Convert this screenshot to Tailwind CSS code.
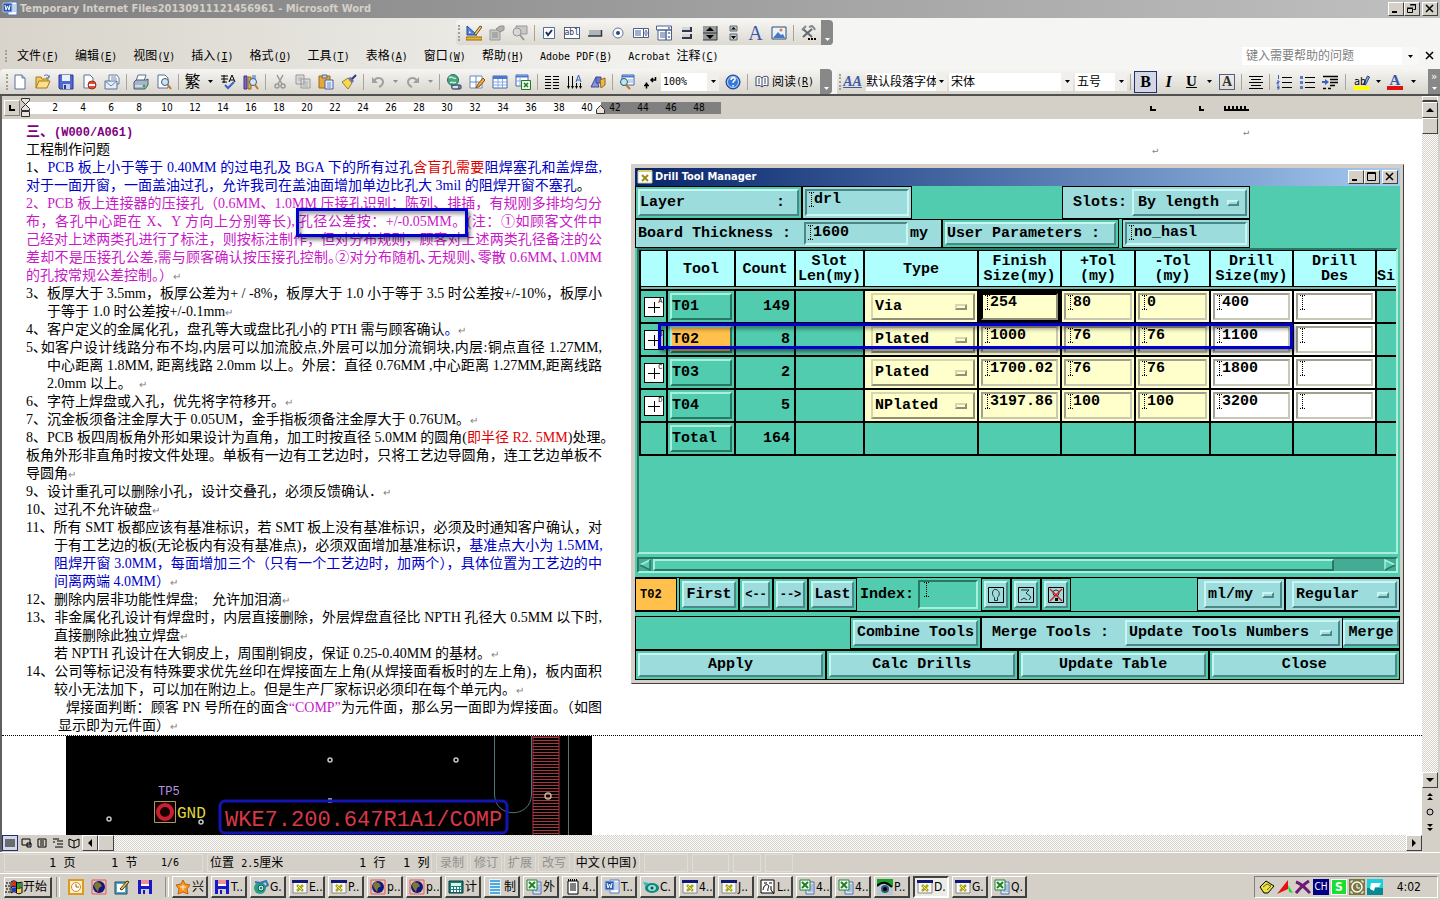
<!DOCTYPE html>
<html lang="zh-CN">
<head>
  <meta charset="UTF-8">
  <meta name="viewport" content="width=device-width, initial-scale=1.0">
  <script src="https://cdn.jsdelivr.net/npm/@tailwindcss/browser@4"></script>
  <title>Temporary Internet Files20130911121456961 - Microsoft Word</title>
</head>
<body class="flex flex-col h-screen overflow-hidden bg-[#d4d0c8] text-black text-xs font-['DejaVu_Sans_Mono','Noto_Sans_CJK_SC',monospace]">

  <!-- icon sprite -->
  <svg class="hidden">
    <symbol id="word" viewBox="0 0 16 16"><path d="M6 1h9v13H6z" fill="#fff" stroke="#5878b8"/><path d="M9 4h5M9 6h5M9 8h5M9 10h5" stroke="#88a8e0"/><path d="M1 2h9v9H1z" fill="#2858b0" stroke="#a8c0f0"/><path d="M3 4l1 5 1.500-4L7 9l1-5" fill="none" stroke="#fff"/></symbol>
    <symbol id="excel" viewBox="0 0 16 16"><path d="M7 3h8v12H7z" fill="#dce8fc" stroke="#5070b0"/><path d="M9 6h5M9 8h5M9 10h5M9 12h5" stroke="#7898d0"/><path d="M1 1h10v10H1z" fill="#f0faf0" stroke="#288030"/><path d="M3 3l6 6M9 3L3 9" stroke="#208028" stroke-width="2"/></symbol>
    <symbol id="xwin" viewBox="0 0 16 16"><path d="M1 2h14v12H1z" fill="#f8f8f8" stroke="#888"/><path d="M0 1h16v3H0z" fill="#101870"/><path d="M5 6l6 6M11 6l-6 6" stroke="#a8a820" stroke-width="2.500"/><path d="M6 7l4 4" stroke="#f0f060"/></symbol>
    <symbol id="xicon" viewBox="0 0 16 14"><path d="M1 1h14v12H1z" fill="#fff" stroke="#c8c8a0"/><path d="M1 1h14" stroke="#d8d070" stroke-width="2"/><path d="M5 5l6 6M11 5l-6 6" stroke="#909018" stroke-width="2"/></symbol>
    <symbol id="globe" viewBox="0 0 16 16"><path d="M1 1h14v14H1z" fill="#d8c8c0" stroke="#e85858"/><circle cx="8" cy="8" r="6" fill="#101880"/><path d="M5 3l4 1 2 3-3 2-1 4-3-4-1-3z" fill="#807830"/></symbol>
    <symbol id="floppy" viewBox="0 0 16 16"><path d="M1 1h14v14H1z" fill="#1818c8"/><path d="M4 1h8v6H4z" fill="#fff"/><path d="M4 2h8M4 4h8" stroke="#e02020"/><path d="M4 10h8v5H4z" fill="#d0d0d0"/><path d="M6 11h2v4H6z" fill="#1818a0"/></symbol>
    <symbol id="gball" viewBox="0 0 16 16"><circle cx="7" cy="9" r="6" fill="#28a088"/><circle cx="8" cy="9" r="3" fill="#b0e8e0" stroke="#105848"/><path d="M2 3l5 1 6-2 2 4-3 2" fill="none" stroke="#3078b8" stroke-width="2"/><circle cx="8" cy="9" r="1" fill="#104848"/></symbol>
    <symbol id="cfish" viewBox="0 0 16 16"><ellipse cx="9" cy="9" rx="7" ry="5" fill="#108880"/><ellipse cx="9" cy="9" rx="4" ry="3" fill="#a0e0d8"/><circle cx="9" cy="9" r="1.500" fill="#105050"/><path d="M0 3l6 1-4 3z" fill="#20c0c8"/></symbol>
    <symbol id="star" viewBox="0 0 16 16"><path d="M8 1l2 4 5 1-3 4 1 5-5-2-5 2 1-5-3-4 5-1z" fill="#f89828" stroke="#c06008"/><path d="M5 8h6M8 6v5" stroke="#fff0c0"/></symbol>
    <symbol id="calc" viewBox="0 0 16 16"><path d="M1 2h14v12H1z" fill="#188080" stroke="#083838"/><path d="M3 4h10v3H3z" fill="#d8f8d8"/><path d="M3 9h10M3 12h10" stroke="#fff" stroke-width="2" stroke-dasharray="2 1"/></symbol>
    <symbol id="lines" viewBox="0 0 16 16"><path d="M2 0h12v16H2z" fill="#e0f4fc"/><path d="M3 2h10M3 5h10M3 8h10M3 11h10M3 14h10" stroke="#2890d0" stroke-width="1.500"/></symbol>
    <symbol id="note" viewBox="0 0 16 16"><path d="M3 2h10v13H3z" fill="#fff" stroke="#000"/><path d="M3 1h10" stroke="#000" stroke-width="2" stroke-dasharray="1 1"/><path d="M5 5h6M5 7h6M5 9h6M5 11h6" stroke="#000"/></symbol>
    <symbol id="doodle" viewBox="0 0 16 16"><path d="M1 1h13v13H1z" fill="#fff" stroke="#000"/><path d="M3 11c1-5 3-6 5-5s-1 4 0 6M4 4h3M9 4h3M11 7v4l3 4" fill="none" stroke="#000"/></symbol>
    <symbol id="eye" viewBox="0 0 16 16"><path d="M0 0h16v16H0z" fill="#b8c8d0"/><path d="M0 0h16v8C11 2 5 3 0 6z" fill="#18a028"/><path d="M0 7c5-5 10-4 15 1" fill="none" stroke="#000" stroke-width="2"/><circle cx="8" cy="10" r="4" fill="#305878"/><circle cx="8" cy="10" r="2" fill="#000"/></symbol>
    <symbol id="clock" viewBox="0 0 16 16"><path d="M1 1h14v14H1z" fill="#fff0c8" stroke="#e09820" stroke-width="2"/><circle cx="8" cy="8" r="4.500" fill="#fff" stroke="#d08818"/><path d="M8 5v3h3" fill="none" stroke="#a06008"/></symbol>
    <symbol id="desk" viewBox="0 0 16 16"><path d="M1 3h12v12H1z" fill="#58a8c8" stroke="#204860"/><path d="M3 5h8v8H3z" fill="#fff"/><path d="M6 10l7-8 2 1-7 8z" fill="#f0d048" stroke="#403000"/></symbol>
    <symbol id="flag" viewBox="0 0 18 16"><path d="M7 3c2-1 3-1 4 0v5c-1-1-2-1-4 0z" fill="#e82818"/><path d="M12 3c2 1 3 1 4 0v5c-1 1-2 1-4 0z" fill="#18a828"/><path d="M7 9c2-1 3-1 4 0v4c-1-1-2-1-4 0z" fill="#1838d8"/><path d="M12 9c2 1 3 1 4 0v4c-1 1-2 1-4 0z" fill="#f8d818"/><path d="M6 3v11M11.500 3v11M17 3v11M6 3c3-2 4-1 5.500 0s3 1 5 0M6 8.500c3-2 4-1 5.500 0s3 1 5 0M6 14c3-2 4-1 5.500 0s3 1 5 0" stroke="#000" fill="none"/><path d="M1 4h4M0 7h5M1 10h4M0 13h5" stroke="#000" stroke-dasharray="2 1"/></symbol>
    <symbol id="dn" viewBox="0 0 5 3"><path d="M0 0h5L2.500 3z"/></symbol>
    <symbol id="caret" viewBox="0 0 5 15"><path d="M0 .5h5M0 14.500h5M2.500 1v13" stroke="#000" stroke-dasharray="1 1"/></symbol>

    <symbol id="t-new" viewBox="0 0 16 16"><path d="M3 1h7l3 3v11H3z" fill="#fff" stroke="#58709c"/><path d="M10 1v3h3" fill="#c8d8f0" stroke="#58709c"/></symbol>
    <symbol id="t-open" viewBox="0 0 16 16"><path d="M1 14V3h5l1 2h6v3" fill="#f0c860" stroke="#a87818"/><path d="M1 14l3-7h11l-3 7z" fill="#fce08c" stroke="#a87818"/><path d="M9 2c2-2 4-1 5 1M14 1v3h-3" fill="none" stroke="#4868a8"/></symbol>
    <symbol id="t-save" viewBox="0 0 16 16"><path d="M1 1h14v14H2l-1-1z" fill="#5068d0" stroke="#28388c"/><path d="M4 1h8v6H4z" fill="#e8f0fc"/><path d="M5 10h7v5H5z" fill="#c8d0e8"/><path d="M6 11h2v4H6z" fill="#28388c"/></symbol>
    <symbol id="t-perm" viewBox="0 0 16 16"><path d="M3 1h6l3 3v10H3z" fill="#fff" stroke="#58709c"/><circle cx="11" cy="11" r="4" fill="#e05038" stroke="#a02818"/><path d="M8 11h6" stroke="#fff" stroke-width="2"/></symbol>
    <symbol id="t-mail" viewBox="0 0 16 16"><path d="M5 1h8l2 3v6H5z" fill="#fff" stroke="#687890"/><path d="M1 7h12v8H1z" fill="#e4ecf8" stroke="#58709c"/><path d="M1 7l6 5 6-5M7 3h5M7 5h6" fill="none" stroke="#7088b0"/></symbol>
    <symbol id="t-print" viewBox="0 0 16 16"><path d="M5 1h8l-2 6H3z" fill="#fff" stroke="#58709c"/><path d="M1 8l2-2h10l2-1v6l-3 4H1z" fill="#a8b4c8" stroke="#485870"/><path d="M2 12h9" stroke="#fff"/><circle cx="11" cy="12" r="1.500" fill="#28b838"/></symbol>
    <symbol id="t-prev" viewBox="0 0 16 16"><path d="M2 1h7l3 3v10H2z" fill="#fff" stroke="#58709c"/><circle cx="9" cy="8" r="3.500" fill="#c8e4f8" stroke="#485870"/><path d="M12 11l3 4" stroke="#c07820" stroke-width="2"/></symbol>
    <symbol id="t-check" viewBox="0 0 16 16"><path d="M1 2h7M1 5h7M4 1v8M2 8h5M9 8l3-7 3 7M10 6h4" fill="none" stroke="#000"/><path d="M5 11l3 3 6-6" fill="none" stroke="#3860d0" stroke-width="2"/></symbol>
    <symbol id="t-res" viewBox="0 0 16 16"><path d="M1 2h3v13H1z" fill="#7868c8" stroke="#403088"/><path d="M5 3h3v12H5z" fill="#e0b048" stroke="#906818"/><path d="M9 1h4v9H9z" fill="#88a8e0"/><circle cx="10" cy="8" r="3.500" fill="#d0e8fc" stroke="#485870"/><path d="M12 11l3 4" stroke="#c07820" stroke-width="2"/></symbol>
    <symbol id="t-cut" viewBox="0 0 16 16"><path d="M5 1l5 9M11 1L6 10" stroke="#989898" stroke-width="1.500"/><circle cx="5" cy="12" r="2" fill="none" stroke="#989898" stroke-width="1.500"/><circle cx="11" cy="12" r="2" fill="none" stroke="#989898" stroke-width="1.500"/></symbol>
    <symbol id="t-copy" viewBox="0 0 16 16"><path d="M1 1h8v9H1zM6 5h9v9H6z" fill="#dcdcdc" stroke="#989898"/><path d="M8 8h5M8 10h5M8 12h5M3 4h4M3 6h3" stroke="#a8a8a8"/></symbol>
    <symbol id="t-paste" viewBox="0 0 16 16"><path d="M1 2h11v12H1z" fill="#e8a838" stroke="#98681c"/><path d="M4 1h5v3H4z" fill="#c8ccd4" stroke="#606878"/><path d="M7 6h8v9H7z" fill="#e8f0fc" stroke="#4860a0"/><path d="M9 9h4M9 11h4M9 13h4" stroke="#6888c8"/></symbol>
    <symbol id="t-brush" viewBox="0 0 16 16"><path d="M1 8l6-4 4 5-4 6z" fill="#f4d858" stroke="#a08020"/><path d="M7 4l3-1 3 4-2 2z" fill="#6870b8"/><path d="M11 5l4-4" stroke="#303870" stroke-width="2"/></symbol>
    <symbol id="t-undo" viewBox="0 0 16 16"><path d="M4 7c3-5 9-3 9 1 0 3-2 4-4 5" fill="none" stroke="#a0a0a0" stroke-width="2"/><path d="M2 3v6h6z" fill="#a0a0a0"/></symbol>
    <symbol id="t-redo" viewBox="0 0 16 16"><path d="M12 7C9 2 3 4 3 8c0 3 2 4 4 5" fill="none" stroke="#a0a0a0" stroke-width="2"/><path d="M14 3v6H8z" fill="#a0a0a0"/></symbol>
    <symbol id="t-link" viewBox="0 0 16 16"><circle cx="7" cy="6" r="5.500" fill="#48a868" stroke="#286888"/><path d="M3 4c3-3 4 2 7 0M4 9c2-2 4 1 6-1" stroke="#b8e8f8" fill="none" stroke-width="1.500"/><path d="M6 11h5a2 2 0 010 4H8a2 2 0 01-2-3zM10 11h3a2 2 0 010 4h-3" fill="none" stroke="#486080" stroke-width="1.500"/></symbol>
    <symbol id="t-tb" viewBox="0 0 16 16"><path d="M1 2h12v12H1zM1 8h12M7 2v12" fill="#fff" stroke="#6888c8"/><path d="M7 14l2-4 5-6 2 2-5 6z" fill="#f0a838" stroke="#885010"/></symbol>
    <symbol id="t-tbl" viewBox="0 0 16 16"><path d="M1 2h14v12H1z" fill="#fff" stroke="#4068b0"/><path d="M1 3.500h14" stroke="#4878d0" stroke-width="3"/><path d="M1 8h14M1 11h14M6 5v9M10.500 5v9" stroke="#88a8e0"/></symbol>
    <symbol id="t-xl" viewBox="0 0 16 16"><path d="M1 1h12v11H1z" fill="#fff" stroke="#4068b0"/><path d="M1 2.500h12" stroke="#4878d0" stroke-width="2"/><path d="M1 7h12M5 4v8" stroke="#88a8e0"/><path d="M6.500 6.500h9v9h-9z" fill="#e8f8e8" stroke="#207828"/><path d="M9 9l4 4M13 9l-4 4" stroke="#207828" stroke-width="1.500"/></symbol>
    <symbol id="t-cols" viewBox="0 0 16 16"><path d="M1 2.500h6M9 2.500h6M1 5.500h6M9 5.500h6M1 8.500h6M9 8.500h6M1 11.500h6M9 11.500h6M1 14.500h6M9 14.500h6" stroke="#000"/></symbol>
    <symbol id="t-dir" viewBox="0 0 16 16"><path d="M1.500 2v12M5.500 2v12M9.500 9v5M13.500 9v5" stroke="#000"/><path d="M0 12l1.500 3L3 12zM4 12l1.500 3L7 12zM8 12l1.500 3 1.500-3zM12 12l1.500 3 1.500-3z"/><path d="M9 8l2.500-7L14 8M10 6h3" fill="none" stroke="#3860b8"/></symbol>
    <symbol id="t-draw" viewBox="0 0 16 16"><path d="M1 13l5-10 3 10z" fill="#8898e0" stroke="#404898"/><path d="M6 3h5v6H6z" fill="#6878d8" stroke="#404898"/><path d="M10 6l5-2v7l-4 3z" fill="#f0b848" stroke="#906818"/></symbol>
    <symbol id="t-map" viewBox="0 0 16 16"><path d="M3 1h12v10H3z" fill="#fff" stroke="#4068b0"/><path d="M3 2.500h12" stroke="#4878d0" stroke-width="2"/><path d="M9 6h5M9 8h5" stroke="#88a8e0"/><circle cx="5" cy="8" r="3.500" fill="#b8e8f0" stroke="#285868"/><path d="M7 11l4 4" stroke="#c07820" stroke-width="2"/></symbol>
    <symbol id="t-mark" viewBox="0 0 16 16"><path d="M13.500 3v3H9M11 4L9 6l2 2M2 11.500h5M4.500 8.500v6M3 10.500h3" fill="none" stroke="#000" stroke-width="1.500"/></symbol>
    <symbol id="t-help" viewBox="0 0 16 16"><circle cx="8" cy="8" r="7" fill="#3878d8" stroke="#183c88"/><circle cx="8" cy="8" r="5.500" fill="none" stroke="#b8d4f8"/><path d="M6 6c0-3 5-3 4 0-1 1-2 1-2 3M8 11v1.500" fill="none" stroke="#fff" stroke-width="1.500"/></symbol>
    <symbol id="t-book" viewBox="0 0 16 16"><path d="M8 4C6 2 4 2 2 3v9c2-1 4-1 6 1 2-2 4-2 6-1V3c-2-1-4-1-6 1z" fill="#fff" stroke="#384868"/><path d="M8 4v9M4 5h2M4 7h2M4 9h2M10 5h2M10 7h2M10 9h2" stroke="#384868"/></symbol>

    <symbol id="c-design" viewBox="0 0 16 16"><path d="M1 1v9h10z" fill="#5888e0" stroke="#204898"/><path d="M3 6v2h2z" fill="#fff"/><path d="M0 12h16v3H0z" fill="#f0b830" stroke="#986810"/><path d="M8 9l6-8 2 1-6 8z" fill="#f0d080" stroke="#704810"/></symbol>
    <symbol id="c-prop" viewBox="0 0 16 16"><path d="M1 5h10v10H1z" fill="#c8c8c8" stroke="#989898"/><path d="M3 8h6M3 10h6M3 12h6" stroke="#888"/><path d="M7 4l4-3h4v4l-4 2z" fill="#b0b0b0" stroke="#909090"/></symbol>
    <symbol id="c-code" viewBox="0 0 16 16"><path d="M4 1h11v8H4z" fill="#c8c8c8" stroke="#989898"/><circle cx="5" cy="7" r="4" fill="#d8d8d8" stroke="#989898"/><path d="M8 10l4 5" stroke="#989898" stroke-width="2"/></symbol>
    <symbol id="c-chk" viewBox="0 0 16 16"><path d="M2.500 2.500h11v11h-11z" fill="#fff" stroke="#5070a0"/><path d="M5 7l2 3 4-5" fill="none" stroke="#203058" stroke-width="2"/></symbol>
    <symbol id="c-btn" viewBox="0 0 16 16"><path d="M2 5h12v6H2z" fill="#b0b4bc"/><path d="M1 11h13.500V5" fill="none" stroke="#303848" stroke-width="1.500"/></symbol>
    <symbol id="c-opt" viewBox="0 0 16 16"><circle cx="8" cy="8" r="5" fill="#fff" stroke="#6078a0"/><circle cx="8" cy="8" r="2" fill="#304878"/></symbol>
    <symbol id="c-list" viewBox="0 0 16 16"><path d="M.5 3.500h15v9H.5zM10.500 3v10M10 8h6" fill="#fff" stroke="#486090"/><path d="M2 6h6M2 8h6M2 10h6" stroke="#486090"/><path d="M11.500 6.500h3L13 5zM11.500 9.500h3L13 11z" fill="#203058"/></symbol>
    <symbol id="c-combo" viewBox="0 0 16 16"><path d="M.5 1h15v4H.5zM2 5h8v10H2zM10 5h5.500v10H10z" fill="#fff" stroke="#486090"/><path d="M4 8h5M4 10h5M4 12h5" stroke="#486090"/><path d="M11.500 8.500h3L13 7zM11.500 11.500h3L13 13zM11.500 2.500h3L13 4z" fill="#203058"/></symbol>
    <symbol id="c-tog" viewBox="0 0 16 16"><path d="M3 6h9V2M3 13h9V9" fill="none" stroke="#303848" stroke-width="2"/><path d="M3 2h8v3H3zM3 9h8v3H3z" fill="#d0d4dc"/></symbol>
    <symbol id="c-spin" viewBox="0 0 16 16"><path d="M1 1h14v14H1z" fill="#989c9c"/><path d="M15 1v14H1M1 8h14" fill="none" stroke="#303838"/><path d="M4 6h8L8 2zM4 10h8l-4 4z"/></symbol>
    <symbol id="c-scr" viewBox="0 0 16 16"><path d="M5 1h7v5H5zM5 9h7v6H5z" fill="#c0c8d0" stroke="#606870"/><path d="M6 4.500h5L8.500 2zM6 11h5l-2.500 3z"/></symbol>
    <symbol id="c-img" viewBox="0 0 16 16"><path d="M1 2h14v12H1z" fill="#e8f4fc" stroke="#304878"/><path d="M2 13l5-6 3 3 2-1 2 4z" fill="#4878c0"/><circle cx="10" cy="5" r="1.500" fill="#e87838"/></symbol>
    <symbol id="c-tool" viewBox="0 0 16 16"><path d="M3 4l9 8M12 4L3 12" stroke="#606870" stroke-width="2"/><path d="M2 5l4-4M9 2l3-1 2 2 1 2" stroke="#808890" fill="none" stroke-width="2"/><path d="M8 14h8" stroke="#000" stroke-width="2" stroke-dasharray="2 1"/></symbol>

    <symbol id="f-al" viewBox="0 0 16 16"><path d="M1 2.500h14M3 5.500h10M1 8.500h14M3 11.500h10M1 14.500h14" stroke="#000"/></symbol>
    <symbol id="f-num" viewBox="0 0 16 16"><path d="M6 3.500h10M6 8.500h10M6 13.500h10" stroke="#000"/><path d="M2.500 1v4M1 7h2v1.500H1V10h2M1 12h2v3H1M1 13.500h2" fill="none" stroke="#3860c0"/></symbol>
    <symbol id="f-bul" viewBox="0 0 16 16"><path d="M6 3.500h10M6 8.500h10M6 13.500h10" stroke="#000"/><path d="M1 2h3v3H1zM1 7h3v3H1zM1 12h3v3H1z" fill="#5878c8"/></symbol>
    <symbol id="f-ind" viewBox="0 0 16 16"><path d="M1 2.500h15M8 5.500h8M8 8.500h8M8 11.500h5M1 14.500h3M6 14.500h3" stroke="#000" stroke-width="1.500"/><path d="M0 7h3V5l4 3-4 3V9H0z" fill="#3860c0"/></symbol>
    <symbol id="f-hi" viewBox="0 0 16 16"><path d="M0 12h16v4H0z" fill="#ffff00"/><path d="M10 10l4-8 2 1-4 8z" fill="#88a8e0" stroke="#304878"/></symbol>
  </svg>

  <header class="flex items-center h-[18px] shrink-0 px-0.5 bg-linear-to-r from-[#808080] to-[#c0c0c0]">
    <svg class="size-4"><use href="#word"/></svg>
    <h1 class="ml-0.5 grow font-bold text-[11px] text-[#d4d0c8] font-['DejaVu_Sans_Condensed','DejaVu_Sans',sans-serif]">Temporary Internet Files20130911121456961 - Microsoft Word</h1>
    <button aria-label="Minimize" class="w-4 h-3.5 bg-[#d4d0c8] border border-white border-r-[#404040] border-b-[#404040]"><svg class="size-3"><path d="M3 9h5" stroke="#000" stroke-width="2"/></svg></button>
    <button aria-label="Restore" class="w-4 h-3.5 bg-[#d4d0c8] border border-white border-r-[#404040] border-b-[#404040]"><svg class="size-3"><path d="M5.500 1.500h5v5h-2M2.500 5.500h5v4h-5zM5 2h6M2 5h6" fill="none" stroke="#000"/></svg></button>
    <button aria-label="Close" class="w-4 h-3.5 ml-0.5 bg-[#d4d0c8] border border-white border-r-[#404040] border-b-[#404040]"><svg class="size-3"><path d="M3 2l7 7M10 2L3 9" stroke="#000" stroke-width="1.500"/></svg></button>
  </header>

  <div class="shrink-0 bg-linear-to-r from-[#d8d4cb] to-[#f5f5f3] to-50% border-b-2 border-[#505050]">
    <div class="flex h-[27px] pt-0.5 pl-[456px]">
      <div id="controls" class="flex items-center rounded bg-linear-to-b from-[#f6f5f2] to-[#dcd9d0]"></div>
    </div>
    <nav class="flex items-center h-[22px] pl-[5px] pr-1">
      <i class="w-0.5 h-3 mr-2.5 border-l-2 border-dotted border-[#a0a098]"></i>
      <div id="menu" class="flex grow gap-4"></div>
      <input aria-label="帮助" placeholder="键入需要帮助的问题" class="w-40 h-[18px] pl-1 bg-white placeholder:text-[#808080]">
      <button aria-label="帮助列表" class="flex items-center justify-center w-4 h-[18px] bg-[#f8f8f6]"><svg class="w-[5px] h-[3px]"><use href="#dn"/></svg></button>
      <button aria-label="关闭文档" class="ml-1.5"><svg class="size-3"><path d="M2 2l7 7M9 2L2 9" stroke="#000" stroke-width="1.500"/></svg></button>
    </nav>
    <div class="flex h-[27px] pt-0.5">
      <div id="standard" class="flex items-center pl-1.5 rounded bg-linear-to-b from-[#f6f5f2] to-[#d8d5cc]"></div>
      <div class="flex items-center grow ml-[5px] pl-0.5 bg-linear-to-b from-[#f6f5f2] to-[#d8d5cc]">
        <i class="w-0.5 h-4 border-l-2 border-dotted border-[#a0a098]"></i>
        <button aria-label="样式和格式" class="w-[23px] text-sm italic font-bold text-[#4058a8] underline font-['Liberation_Serif',serif]">AA</button>
        <div class="flex w-[81px] h-[18px] ml-0.5 bg-white"><select aria-label="样式" class="min-w-0 grow appearance-none"><option>默认段落字体</option></select><span class="flex items-center justify-center w-3 bg-[#f0efeb]"><svg class="w-[5px] h-[3px]"><use href="#dn"/></svg></span></div>
        <div class="flex w-[124px] h-[18px] ml-0.5 bg-white"><select aria-label="字体" class="min-w-0 grow appearance-none pl-0.5"><option>宋体</option></select><span class="flex items-center justify-center w-3 bg-[#f0efeb]"><svg class="w-[5px] h-[3px]"><use href="#dn"/></svg></span></div>
        <div class="flex w-[52px] h-[18px] ml-0.5 bg-white"><select aria-label="字号" class="min-w-0 grow appearance-none pl-0.5"><option>五号</option></select><span class="flex items-center justify-center w-3 bg-[#f0efeb]"><svg class="w-[5px] h-[3px]"><use href="#dn"/></svg></span></div>
        <i class="w-px h-4 mx-[3px] bg-[#a8a59c]"></i>
        <button class="w-[23px] h-[22px] border border-[#203070] bg-[#d4d8e4] text-base leading-5 font-bold font-['Liberation_Serif',serif]">B</button>
        <button class="w-[23px] text-base font-bold italic font-['Liberation_Serif',serif]">I</button>
        <button class="w-[23px] text-[15px] font-bold underline font-['Liberation_Serif',serif]">U</button>
        <button aria-label="下划线样式" class="flex justify-center w-3"><svg class="w-[5px] h-[3px]"><use href="#dn"/></svg></button>
        <button class="w-4 h-4 mx-1 border border-[#506080] text-sm leading-3.5 font-bold text-[#303030] font-['Liberation_Serif',serif]">A</button>
        <i class="w-px h-4 mx-0.5 bg-[#a8a59c]"></i>
        <button aria-label="居中" class="flex justify-center w-[23px]"><svg class="size-4"><use href="#f-al"/></svg></button>
        <i class="w-px h-4 mx-0.5 bg-[#a8a59c]"></i>
        <button aria-label="编号" class="flex justify-center w-[23px]"><svg class="size-4"><use href="#f-num"/></svg></button>
        <button aria-label="项目符号" class="flex justify-center w-[23px]"><svg class="size-4"><use href="#f-bul"/></svg></button>
        <button aria-label="缩进" class="flex justify-center w-[23px]"><svg class="size-4"><use href="#f-ind"/></svg></button>
        <i class="w-px h-4 mx-1 bg-[#a8a59c]"></i>
        <button class="relative w-[23px] h-4 text-[10px] leading-2 text-left pl-1"><svg class="absolute inset-0 w-[23px] h-4"><use href="#f-hi"/></svg><span class="relative">ab</span></button>
        <button aria-label="突出显示颜色" class="flex justify-center w-2.5"><svg class="w-[5px] h-[3px]"><use href="#dn"/></svg></button>
        <button class="w-4 h-4 mx-1 border-b-4 border-[#e01010] text-[15px] leading-3 font-bold text-[#3858a8] font-['Liberation_Serif',serif]">A</button>
        <button aria-label="字体颜色" class="flex justify-center w-3"><svg class="w-[5px] h-[3px]"><use href="#dn"/></svg></button>
        <button aria-label="工具栏选项" class="flex flex-col items-center justify-between w-3 h-full ml-auto py-1 bg-[#888] text-white text-[10px] leading-2">»<svg class="w-[5px] h-[3px] fill-white"><use href="#dn"/></svg></button>
      </div>
    </div>
  </div>

  <main class="flex grow min-h-0">
    <div class="flex flex-col grow min-w-0 border-l-2 border-[#606060]">

      <div class="flex items-center h-[23px] shrink-0 pl-0.5 text-[10px] leading-3 font-['DejaVu_Sans_Condensed',sans-serif]">
        <button aria-label="制表符" class="size-4 border border-white border-r-[#808080] border-b-[#808080]"><svg class="size-3.5"><path d="M5 4v5h5" fill="none" stroke="#000" stroke-width="2"/></svg></button>
        <svg class="w-[11px] h-5 -mr-1.5 z-10"><path d="M1.500.5h8v2l-4 4-4-4zM1.500 12.500v-2l4-4 4 4v2zM1.500 13.500h8v5h-8z" fill="#e8e4dc" stroke="#303030"/></svg>
        <div id="ruler-in" class="flex bg-white pl-[16px]"></div>
        <svg class="w-[11px] h-3 -ml-1.5 -mr-[5px] mt-1 z-10"><path d="M1.500 9.500v-4l4-4 4 4v4z" fill="#e8e4dc" stroke="#303030"/></svg>
        <div id="ruler-out" class="flex bg-[#808080] pr-2"></div>
        <svg class="w-28 h-2.5 ml-auto mr-[172px]"><path d="M13 3v4h5M62 3v4h4M86 7h25M87 3v4M91 3v4M95 3v4M99 3v4M103 3v4M107 3v4" fill="none" stroke="#000" stroke-width="2"/></svg>
      </div>

      <div class="flex flex-col grow min-h-0 overflow-hidden bg-white">
        <div class="flex pt-1 pl-6">
          <article class="w-[576px] shrink-0 whitespace-nowrap text-sm leading-[18px] font-['Liberation_Serif','Noto_Sans_CJK_SC',serif]">
            <h2 class="font-bold text-[#800080]">三、<span class="text-xs leading-none font-['Liberation_Mono',monospace]">(W000/A061)</span></h2>
            <p>工程制作问题</p>
            <div class="text-[#0000c8]">
              <p class="[text-align-last:justify]"><span class="text-black">1、</span>PCB 板上小于等于 0.40MM 的过电孔及 BGA 下的所有过孔<span class="text-[#e00000]">含盲孔需要</span>阻焊塞孔和盖焊盘,</p>
              <p>对于一面开窗，一面盖油过孔，允许我司在盖油面增加单边比孔大 3mil 的阻焊开窗不塞孔<span class="text-black">。</span></p>
            </div>
            <div class="relative text-[#c818c8]">
              <p class="[text-align-last:justify]">2、PCB 板上连接器的压接孔（0.6MM、1.0MM 压接孔识别：陈列、排插，有规刚多排均匀分</p>
              <p class="[text-align-last:justify]">布，各孔中心距在 X、Y 方向上分别等长), 孔径公差按：+/-0.05MM。(注：①如顾客文件中</p>
              <p class="[text-align-last:justify]">己经对上述两类孔进行了标注，则按标注制作；但对分布规则，顾客对上述两类孔径备注的公</p>
              <p class="[text-align-last:justify]">差却不是压接孔公差,需与顾客确认按压接孔控制｡②对分布随机､无规则､零散 0.6MM､1.0MM</p>
              <p>的孔按常规公差控制。）<span class="text-[10px] leading-none text-[#808080]">↵</span></p>
              <i class="absolute left-[270px] top-[13px] w-[172px] h-[29px] border-3 border-[#0000d0] shadow-[2px_3px_4px_rgba(0,0,0,.5),inset_2px_3px_4px_rgba(0,0,0,.4)]"></i>
            </div>
            <div>
              <p class="[text-align-last:justify]">3、板厚大于 3.5mm，板厚公差为+ / -8%，板厚大于 1.0 小于等于 3.5 时公差按+/-10%，板厚小</p>
              <p class="pl-[21px]">于等于 1.0 时公差按+/-0.1mm<span class="text-[10px] leading-none text-[#808080]">↵</span></p>
            </div>
            <p>4、客户定义的金属化孔，盘孔等大或盘比孔小的 PTH 需与顾客确认<span class="text-[#0000c8]">。</span><span class="text-[10px] leading-none text-[#808080]">↵</span></p>
            <div>
              <p class="[text-align-last:justify]">5､如客户设计线路分布不均,内层可以加流胶点,外层可以加分流铜块,内层:铜点直径 1.27MM,</p>
              <p class="pl-[21px] [text-align-last:justify]">中心距离 1.8MM, 距离线路 2.0mm 以上。外层：直径 0.76MM ,中心距离 1.27MM,距离线路</p>
              <p class="pl-[21px]">2.0mm 以上。&nbsp; <span class="text-[10px] leading-none text-[#808080]">↵</span></p>
            </div>
            <p>6、字符上焊盘或入孔，优先将字符移开。<span class="text-[10px] leading-none text-[#808080]">↵</span></p>
            <p>7、沉金板须备注金厚大于 0.05UM，金手指板须备注金厚大于 0.76UM。<span class="text-[10px] leading-none text-[#808080]">↵</span></p>
            <div>
              <p class="[text-align-last:justify]">8、PCB 板四周板角外形如果设计为直角，加工时按直径 5.0MM 的圆角(<span class="text-[#e00000]">即半径 R2. 5MM</span>)处理｡</p>
              <p class="[text-align-last:justify]">板角外形非直角时按文件处理。单板有一边有工艺边时，只将工艺边导圆角，连工艺边单板不</p>
              <p>导圆角<span class="text-[10px] leading-none text-[#808080]">↵</span></p>
            </div>
            <p>9、设计重孔可以删除小孔，设计交叠孔，必须反馈确认．<span class="text-[10px] leading-none text-[#808080]">↵</span></p>
            <p>10、过孔不允许破盘<span class="text-[10px] leading-none text-[#808080]">↵</span></p>
            <div>
              <p class="[text-align-last:justify]">11、所有 SMT 板都应该有基准标识，若 SMT 板上没有基准标识，必须及时通知客户确认，对</p>
              <p class="pl-7 [text-align-last:justify]">于有工艺边的板(无论板内有没有基准点)，必须双面增加基准标识，<span class="text-[#0000c8]">基准点大小为 1.5MM,</span></p>
              <p class="pl-7 text-[#0000c8] [text-align-last:justify]">阻焊开窗 3.0MM，每面增加三个（只有一个工艺边时，加两个），具体位置为工艺边的中</p>
              <p class="pl-7 text-[#0000c8]">间离两端 4.0MM）<span class="text-[10px] leading-none text-[#808080]">↵</span></p>
            </div>
            <p>12、删除内层非功能性焊盘;&nbsp;&nbsp;&nbsp; 允许加泪滴<span class="text-[10px] leading-none text-[#808080]">↵</span></p>
            <div>
              <p class="[text-align-last:justify]">13、非金属化孔设计有焊盘时，内层直接删除，外层焊盘直径比 NPTH 孔径大 0.5MM 以下时,</p>
              <p class="pl-7">直接删除此独立焊盘<span class="text-[10px] leading-none text-[#808080]">↵</span></p>
              <p class="pl-7">若 NPTH 孔设计在大铜皮上，周围削铜皮，保证 0.25-0.40MM 的基材。<span class="text-[10px] leading-none text-[#808080]">↵</span></p>
            </div>
            <div>
              <p class="[text-align-last:justify]">14、公司等标记没有特殊要求优先丝印在焊接面左上角(从焊接面看板时的左上角)，板内面积</p>
              <p class="pl-7">较小无法加下，可以加在附边上。但是生产厂家标识必须印在每个单元内。<span class="text-[10px] leading-none text-[#808080]">↵</span></p>
              <p class="pl-10 [text-align-last:justify]">焊接面判断：顾客 PN 号所在的面含<span class="text-[#c818c8]">“COMP”</span>为元件面，那么另一面即为焊接面。（如图</p>
              <p class="pl-8">显示即为元件面）<span class="text-[10px] leading-none text-[#808080]">↵</span></p>
            </div>
          </article>

          <div class="flex flex-col grow min-w-0 ml-[29px] mr-[18px]">
            <div class="flex flex-col h-[41px] pr-[155px] text-[10px] leading-[18px] text-[#808080] text-right"><span>↵</span><span class="pr-[91px]">↵</span></div>

            <section class="overflow-hidden p-[3px] bg-[#d4d0c8] border border-[#d4d0c8] border-r-[#404040] border-b-[#404040] text-[15px] font-bold font-['Liberation_Mono',monospace]">
              <header class="flex items-center h-[18px] px-0.5 bg-linear-to-r from-[#0a246a] to-[#a6caf0]">
                <svg class="w-4 h-3.5"><use href="#xicon"/></svg>
                <h2 class="grow ml-0.5 text-white text-[11px] font-['DejaVu_Sans_Condensed','DejaVu_Sans',sans-serif]">Drill Tool Manager</h2>
                <button aria-label="Minimize" class="w-4 h-3.5 bg-[#d4d0c8] border border-white border-r-[#404040] border-b-[#404040]"><svg class="size-3"><path d="M3 9h5" stroke="#000" stroke-width="2"/></svg></button>
                <button aria-label="Maximize" class="w-4 h-3.5 bg-[#d4d0c8] border border-white border-r-[#404040] border-b-[#404040]"><svg class="size-3"><path d="M2.500 1.500h8v8h-8zM2 2.500h9" fill="none" stroke="#000"/></svg></button>
                <button aria-label="Close" class="w-4 h-3.5 ml-0.5 bg-[#d4d0c8] border border-white border-r-[#404040] border-b-[#404040]"><svg class="size-3"><path d="M3 2l7 7M10 2L3 9" stroke="#000" stroke-width="1.500"/></svg></button>
              </header>

              <div class="bg-[#52ccae]">
                <div class="flex h-[33px]">
                  <div class="w-[167px] p-0.5 border border-black"><button class="flex items-center justify-between w-full h-full pr-3 bg-[#9cdcdc] border-2 border-[#c8f6f2] border-r-[#4c8886] border-b-[#4c8886]"><span>Layer</span><span>:</span></button></div>
                  <div class="w-[110px] p-0.5 bg-[#9cdcdc] border border-black"><div class="flex items-start h-full pt-px pl-0.5 border-2 border-[#4c8886] border-r-[#c8f6f2] border-b-[#c8f6f2]"><svg class="w-[5px] h-[15px] shrink-0"><use href="#caret"/></svg><input aria-label="Layer" value="drl" class="w-full h-4 min-w-0"></div></div>
                  <div class="flex items-center w-[188px] ml-[150px] p-0.5 pl-2.5 bg-[#9cdcdc] border border-black"><label for="slots" class="w-[59px]">Slots:</label><div class="flex items-center grow h-full pl-1 pr-1.5 border-2 border-[#c8f6f2] border-r-[#4c8886] border-b-[#4c8886]"><select id="slots" class="min-w-0 grow appearance-none"><option>By length</option></select><i class="w-3 h-1.5 border-2 border-[#c8f6f2] border-r-[#4c8886] border-b-[#4c8886]"></i></div></div>
                </div>
                <div class="flex h-[29px]">
                  <div class="flex items-center w-[307px] p-0.5 bg-[#9cdcdc] border border-black"><label for="thick" class="w-[166px]">Board Thickness :</label><div class="flex items-start w-[104px] h-full pt-px pl-0.5 border-2 border-[#4c8886] border-r-[#c8f6f2] border-b-[#c8f6f2]"><svg class="w-[5px] h-[15px] shrink-0"><use href="#caret"/></svg><input id="thick" value="1600" class="w-full h-4 min-w-0"></div><span class="pl-0.5">my</span></div>
                  <div class="w-[177px] p-0.5 border border-black"><button class="w-full h-full leading-5 text-left bg-[#9cdcdc] border-2 border-[#c8f6f2] border-r-[#4c8886] border-b-[#4c8886]">User Parameters :</button></div>
                  <div class="w-[128px] ml-[3px] p-0.5 bg-[#9cdcdc] border border-black"><div class="flex items-start h-full pt-px pl-0.5 border-2 border-[#4c8886] border-r-[#c8f6f2] border-b-[#c8f6f2]"><svg class="w-[5px] h-[15px] shrink-0"><use href="#caret"/></svg><input aria-label="User Parameters" value="no_hasl" class="w-full h-4 min-w-0"></div></div>
                </div>

                <div class="relative h-[306px] mx-0.5 border-2 border-[#287864] border-r-[#a8f0dc] border-b-[#a8f0dc]">
                  <div class="overflow-hidden">
                    <table class="table-fixed w-[820px] border-separate border-spacing-0 border-l-2 border-black">
                      <colgroup><col class="w-[27px]"><col class="w-[68px]"><col class="w-[60px]"><col class="w-[69px]"><col class="w-[114px]"><col class="w-[83px]"><col class="w-[74px]"><col class="w-[75px]"><col class="w-[83px]"><col class="w-[83px]"><col></colgroup>
                      <thead id="heads"></thead>
                      <tbody id="tools"></tbody>
                    </table>
                  </div>
                  <i class="absolute left-[19px] top-[73px] w-[635px] h-[26px] border-3 border-[#0000d0] shadow-[2px_3px_4px_rgba(0,0,0,.5),inset_2px_3px_4px_rgba(0,0,0,.4)]"></i>
                </div>

                <div class="flex h-4 mt-[3px] mx-0.5 bg-[#44ac94] border-2 border-[#287864] border-r-[#a8f0dc] border-b-[#a8f0dc]">
                  <svg class="w-3 h-3 shrink-0"><path d="M11 1L1 6l10 5z" fill="#52ccae"/><path d="M11 1L1 6" fill="none" stroke="#a8f0dc" stroke-width="1.500"/><path d="M1 6l10 5V1" fill="none" stroke="#287864" stroke-width="1.500"/></svg>
                  <div class="w-9/10 ml-0.5 bg-[#52ccae] border-2 border-[#a8f0dc] border-r-[#287864] border-b-[#287864]"></div>
                  <svg class="w-3 h-3 ml-auto shrink-0"><path d="M1 1l10 5-10 5z" fill="#52ccae"/><path d="M1 11V1l10 5" fill="none" stroke="#a8f0dc" stroke-width="1.500"/><path d="M11 6L1 11" stroke="#287864" stroke-width="1.500"/></svg>
                </div>

                <div class="flex h-[35px] mt-[4px] border-y border-black">
                  <div class="flex items-center w-[42px] pl-1 bg-[#ffc04c] border border-black text-xs">T02</div>
                  <div id="steps" class="flex ml-0.5"></div>
                  <label for="index" class="flex items-center pl-[3px]">Index:</label>
                  <div class="flex items-start w-[60px] my-0.5 ml-1 pl-1 border-2 border-[#287864] border-r-[#a8f0dc] border-b-[#a8f0dc]"><svg class="w-[5px] h-[15px] shrink-0"><use href="#caret"/></svg><input id="index" class="w-full h-4 min-w-0"></div>
                  <div class="flex ml-[3px]">
                    <div class="w-[30px] p-0.5 border border-black"><button aria-label="Highlight" class="flex items-center justify-center w-full h-full bg-[#9cdcdc] border-2 border-[#c8f6f2] border-r-[#4c8886] border-b-[#4c8886]"><svg class="size-4"><path d="M.5.500h15v15H.5z" fill="none" stroke="#000"/><path d="M6.500 10.500v3h3v-3c3-3 2-7-1.500-8s-5 5-1.500 8z" fill="none" stroke="#303030"/></svg></button></div>
                    <div class="w-[30px] p-0.5 border border-black"><button aria-label="Select" class="flex items-center justify-center w-full h-full bg-[#9cdcdc] border-2 border-[#c8f6f2] border-r-[#4c8886] border-b-[#4c8886]"><svg class="size-4"><path d="M.5.500h15v15H.5z" fill="none" stroke="#000"/><path d="M3 3h8l-3 3 5 4-2 3M3 13l3-2 3 2" fill="none" stroke="#303030"/></svg></button></div>
                    <div class="w-[30px] p-0.5 border border-black"><button aria-label="Clear" class="flex items-center justify-center w-full h-full bg-[#9cdcdc] border-2 border-[#c8f6f2] border-r-[#4c8886] border-b-[#4c8886]"><svg class="size-4"><path d="M.5.500h15v15H.5z" fill="none" stroke="#000"/><circle cx="8" cy="6" r="3" fill="none" stroke="#303030"/><path d="M7 11h3v3H7z"/><path d="M2 2l12 12M14 2L2 14" stroke="#e02020" stroke-width="1.500"/></svg></button></div>
                  </div>
                  <div class="flex items-center w-[88px] ml-auto p-0.5 pl-1.5 bg-[#9cdcdc] border border-black"><div class="flex items-center w-full h-full pl-0.5 pr-1.5 border-2 border-[#c8f6f2] border-r-[#4c8886] border-b-[#4c8886]"><select aria-label="Units" class="min-w-0 grow appearance-none"><option>ml/my</option></select><i class="w-3 h-1.5 border-2 border-[#c8f6f2] border-r-[#4c8886] border-b-[#4c8886]"></i></div></div>
                  <div class="flex items-center w-[115px] p-0.5 pl-1.5 bg-[#9cdcdc] border border-black"><div class="flex items-center w-full h-full pl-0.5 pr-1.5 border-2 border-[#c8f6f2] border-r-[#4c8886] border-b-[#4c8886]"><select aria-label="Mode" class="min-w-0 grow appearance-none"><option>Regular</option></select><i class="w-3 h-1.5 border-2 border-[#c8f6f2] border-r-[#4c8886] border-b-[#4c8886]"></i></div></div>
                </div>

                <div class="flex justify-end h-[34px] mt-1 border border-black">
                  <div class="w-[131px] p-0.5 border border-black"><button class="w-full h-full whitespace-nowrap bg-[#9cdcdc] border-2 border-[#c8f6f2] border-r-[#4c8886] border-b-[#4c8886]"><span class="-mx-1">Combine Tools</span></button></div>
                  <div class="flex items-center w-[362px] p-0.5 pl-2.5 bg-[#9cdcdc] border border-black"><label for="merge" class="w-[133px]">Merge Tools :</label><div class="flex items-center grow h-full pl-0.5 pr-1.5 border-2 border-[#c8f6f2] border-r-[#4c8886] border-b-[#4c8886]"><select id="merge" class="min-w-0 grow appearance-none"><option>Update Tools Numbers</option></select><i class="w-3 h-1.5 border-2 border-[#c8f6f2] border-r-[#4c8886] border-b-[#4c8886]"></i></div></div>
                  <div class="w-[56px] py-0.5 border-y border-black"><button class="w-full h-full bg-[#9cdcdc] border-2 border-[#c8f6f2] border-r-[#4c8886] border-b-[#4c8886]">Merge</button></div>
                </div>
                <div id="actions" class="grid grid-cols-4 h-[30px]"></div>
              </div>
            </section>
          </div>
        </div>

        <div class="border-t border-dotted border-black"></div>
        <svg class="w-[526px] h-[100px] ml-16 shrink-0 bg-black font-['Liberation_Mono',monospace]" viewBox="66 735 526 100">
          <defs><pattern id="hatch" width="26" height="3" patternUnits="userSpaceOnUse"><path d="M0 1.500h26" stroke="#a83840"/></pattern></defs>
          <path d="M533 735h26v100h-26z" fill="url(#hatch)" stroke="#a83840"/>
          <path d="M494.500 735v58c0 25 37 25 37 0v-58M568.500 735v100" fill="none" stroke="#507878"/>
          <g fill="none" stroke="#c0c8c8" stroke-width="1.500"><circle cx="330" cy="759" r="2"/><circle cx="456" cy="759" r="2"/><circle cx="109" cy="818" r="2"/><circle cx="201" cy="821" r="2"/><circle cx="548" cy="795" r="3" stroke="#c8b098"/><path d="M328 798h4M328 801h4"/></g>
          <path d="M154.500 800.500h21v21h-21z" fill="#180000" stroke="#a0a060"/>
          <circle cx="165" cy="811" r="7" fill="none" stroke="#c82030" stroke-width="4"/>
          <rect x="220" y="800" width="287" height="32" rx="5" fill="none" stroke="#1414b4" stroke-width="3"/>
          <text x="158" y="794" font-size="12" fill="#b890e0">TP5</text>
          <text x="177" y="817" font-size="16" fill="#e0d840">GND</text>
          <text x="225" y="825" font-size="22" fill="#d83848">WKE7.200.647R1A1/COMP</text>
        </svg>
      </div>

      <div class="flex h-[17px] shrink-0">
        <div id="views" class="flex"></div>
        <button aria-label="Scroll left" class="size-4 border border-white border-r-[#404040] border-b-[#404040]"><svg class="size-3.5"><path d="M9 3v8L5 7z"/></svg></button>
        <i class="w-4 h-4 border border-white border-r-[#404040] border-b-[#404040]"></i>
        <div class="grow h-4 bg-[repeating-conic-gradient(#d4d0c8_0_25%,#fff_0_50%)] bg-[length:2px_2px]"></div>
        <button aria-label="Scroll right" class="size-4 border border-white border-r-[#404040] border-b-[#404040]"><svg class="size-3.5"><path d="M5 3v8l4-4z"/></svg></button>
      </div>
    </div>

    <div class="flex flex-col items-center w-4 mr-0.5 shrink-0">
      <i class="w-4 h-1.5 border border-white border-b-2 border-b-[#404040]"></i>
      <button aria-label="Scroll up" class="size-4 border border-white border-r-[#404040] border-b-[#404040]"><svg class="size-3.5"><path d="M3 9h8L7 5z"/></svg></button>
      <i class="size-4 border border-white border-r-[#404040] border-b-[#404040]"></i>
      <div class="grow w-4 bg-[repeating-conic-gradient(#d4d0c8_0_25%,#fff_0_50%)] bg-[length:2px_2px]"></div>
      <button aria-label="Scroll down" class="size-4 border border-white border-r-[#404040] border-b-[#404040]"><svg class="size-3.5"><path d="M3 5h8L7 9z"/></svg></button>
      <button aria-label="Previous page"><svg class="size-4"><path d="M5 8h6L8 5zM5 12h6L8 9z"/></svg></button>
      <button aria-label="Browse object"><svg class="size-4"><circle cx="8" cy="8" r="3" fill="#c8c8c8" stroke="#000"/></svg></button>
      <button aria-label="Next page"><svg class="size-4"><path d="M5 4h6L8 7zM5 8h6l-3 3z"/></svg></button>
      <div class="h-4"></div>
    </div>
  </main>

  <footer class="flex items-center gap-0.5 h-[21px] shrink-0 px-1 border-t border-white whitespace-nowrap">
    <div class="flex items-center w-[199px] h-[18px] pl-11 border border-[#e0ddd6]"><span class="w-[62px]">1 页</span><span class="w-[50px]">1 节</span><span class="text-[10px]">1/6</span></div>
    <div class="flex items-center w-[225px] h-[18px] ml-0.5 pl-0.5 border border-[#e0ddd6]"><span class="w-[149px]">位置 <span class="text-[10px]">2.5</span>厘米</span><span class="w-11">1 行</span><span>1 列</span></div>
    <div class="flex items-center justify-center w-8 h-[18px] ml-0.5 border border-[#e0ddd6] text-[#909090]">录制</div>
    <div class="flex items-center justify-center w-8 h-[18px] border border-[#e0ddd6] text-[#909090]">修订</div>
    <div class="flex items-center justify-center w-8 h-[18px] border border-[#e0ddd6] text-[#909090]">扩展</div>
    <div class="flex items-center justify-center w-8 h-[18px] border border-[#e0ddd6] text-[#909090]">改写</div>
    <div class="flex items-center justify-center w-[66px] h-[18px] ml-0.5 border border-[#e0ddd6]">中文(中国)</div>
    <div class="w-11 h-[18px] ml-0.5 border border-[#e0ddd6]"></div>
    <div class="w-[37px] h-[18px] ml-0.5 border border-[#e0ddd6]"></div>
    <div class="w-7 h-[18px] ml-0.5 border border-[#e0ddd6]"></div>
    <div class="w-7 h-[18px] ml-0.5 border border-[#e0ddd6]"></div>
  </footer>

  <div class="flex items-center h-[27px] shrink-0 pl-1 pr-0.5 border-t border-white font-['DejaVu_Sans_Condensed','Noto_Sans_CJK_SC',sans-serif]">
    <button class="flex items-center w-12 h-[21px] border border-white border-r-2 border-b-2 border-r-[#404040] border-b-[#404040] whitespace-nowrap"><svg class="w-[18px] h-4 shrink-0"><use href="#flag"/></svg>开始</button>
    <i class="w-1 h-5 ml-1 mr-2 border-x border-l-[#909090] border-r-white"></i>
    <div class="flex gap-[7px]">
      <button aria-label="Outlook"><svg class="size-4"><use href="#clock"/></svg></button>
      <button aria-label="Browser"><svg class="size-4"><use href="#globe"/></svg></button>
      <button aria-label="Desktop"><svg class="size-4"><use href="#desk"/></svg></button>
      <button aria-label="Save"><svg class="size-4"><use href="#floppy"/></svg></button>
    </div>
    <i class="w-1 h-5 ml-3 mr-[3px] border-x border-l-[#909090] border-r-white"></i>
    <div id="tasks" class="flex gap-[3px]"></div>
    <div class="flex items-center gap-0.5 w-[184px] h-[22px] ml-auto pl-1 border border-[#808080] border-r-white border-b-white">
      <svg class="size-4"><path d="M1 8l6-6 8 5-6 7H5z" fill="#e8e048" stroke="#000"/><path d="M4 8l4-3 4 2-4 4" fill="none" stroke="#706810"/></svg>
      <svg class="size-4"><path d="M0 15L11 1v9z" fill="#e81010"/><path d="M11 6l5 8-4-1z" fill="#18d828"/></svg>
      <svg class="size-4"><path d="M1 3c6 2 9 6 14 11M14 2C9 5 6 8 1 14" fill="none" stroke="#701878" stroke-width="3"/></svg>
      <span class="w-4 h-4 bg-[#000080] text-white text-[10px] leading-4 text-center">CH</span>
      <span class="w-4 h-4 bg-[#18e030] border border-white text-white font-bold text-xs leading-3.5 text-center">S</span>
      <svg class="size-4"><path d="M0 0h16v16H0z" fill="#7c7840"/><circle cx="8" cy="8" r="5" fill="none" stroke="#fff" stroke-width="1.500"/><path d="M8 5v4h3M2 4V2h2M14 4V2h-2M2 12v2h2M14 12v2h-2" fill="none" stroke="#fff"/></svg>
      <svg class="size-4"><path d="M0 0h16v16H0z" fill="#18d0e0"/><path d="M0 9h16v7H0z" fill="#088890"/><path d="M4 4h10l-2 4H8l-1 4-4-2z" fill="#fff"/></svg>
      <time class="ml-auto mr-4 text-xs">4:02</time>
    </div>
  </div>

  <script>
    const fill = (id, html) => { document.getElementById(id).innerHTML = html; };

    const sep = '<i class="w-px h-4 ml-[3px] mr-0.5 bg-[#a8a59c]"></i>';
    const handle = '<i class="w-0.5 h-4 border-l-2 border-dotted border-[#a0a098]"></i>';
    const endCap = '<button aria-label="工具栏选项" class="flex items-end justify-center w-3 h-full pb-1 ml-0.5 rounded-r bg-[#888]"><svg class="w-[5px] h-[3px] fill-white"><use href="#dn"/></svg></button>';
    const arrow = '<button aria-label="更多" class="flex justify-center w-3"><svg class="w-[5px] h-[3px]"><use href="#dn"/></svg></button>';
    const grayArrow = '<button aria-label="更多" class="flex justify-center w-3"><svg class="w-[5px] h-[3px] fill-[#909090]"><use href="#dn"/></svg></button>';
    const tool = (name) => `<button aria-label="${name}" class="flex justify-center w-[23px]"><svg class="size-4"><use href="#${name}"/></svg></button>`;
    const tools = (names) => names.split(' ').map(tool).join('');

    fill('controls', '<i class="w-0.5 h-4 ml-0.5 mr-0.5 border-l-2 border-dotted border-[#a0a098]"></i>'
      + tools('c-design c-prop c-code') + sep + tool('c-chk')
      + '<button class="flex justify-center w-[23px]"><span class="w-4 h-3 border border-[#506080] bg-white text-[8px] leading-2.5 text-[#203058]">abl</span></button>'
      + tools('c-btn c-opt c-list c-combo c-tog c-spin c-scr')
      + '<button class="w-[23px] text-xl leading-5 text-[#3858a8] font-[\'Liberation_Serif\',serif]">A</button>'
      + tool('c-img') + sep + tool('c-tool') + endCap);

    fill('standard', handle + tools('t-new t-open t-save t-perm t-mail') + sep + tools('t-print t-prev') + sep
      + '<button class="w-[23px] text-base leading-5">繁</button>' + arrow + tools('t-check t-res') + sep
      + tools('t-cut t-copy t-paste t-brush') + sep + tool('t-undo') + grayArrow + tool('t-redo') + grayArrow + sep
      + tools('t-link t-tb t-tbl t-xl') + sep + tools('t-cols t-dir t-draw') + sep + tools('t-map t-mark')
      + '<div class="flex w-[58px] h-[18px] mr-0.5 bg-white"><select aria-label="显示比例" class="min-w-0 grow appearance-none pl-0.5 text-[10px]"><option>100%</option></select><span class="flex items-center justify-center w-3 bg-[#f0efeb]"><svg class="w-[5px] h-[3px]"><use href="#dn"/></svg></span></div>'
      + tool('t-help') + sep
      + '<button class="flex items-center w-[68px] pl-1 whitespace-nowrap"><svg class="size-4"><use href="#t-book"/></svg><span class="ml-0.5">阅读</span><span class="text-[10px]">(<u>R</u>)</span></button>' + endCap);

    const menu = [['文件', 'F'], ['编辑', 'E'], ['视图', 'V'], ['插入', 'I'], ['格式', 'O'], ['工具', 'T'], ['表格', 'A'], ['窗口', 'W'], ['帮助', 'H'], ['Adobe PDF', 'B'], ['Acrobat 注释', 'C']];
    fill('menu', menu.map(([t, k]) => {
      const text = t.replace(/[A-Za-z ]+/g, (m) => `<span class="text-[10px]">${m}</span>`);
      return `<button class="whitespace-pre">${text}<span class="text-[10px]">(<u>${k}</u>)</span></button>`;
    }).join(''));

    const tick = (n) => `<span class="w-7 text-center">${n}</span>`;
    const even = [...Array(24)].map((_, i) => (i + 1) * 2);
    fill('ruler-in', even.slice(0, 20).map(tick).join(''));
    fill('ruler-out', even.slice(20).map(tick).join(''));

    fill('heads', '<tr class="h-[37px] leading-[15px]">' + ['', 'Tool', 'Count', 'Slot<br>Len(my)', 'Type', 'Finish<br>Size(my)', '+Tol<br>(my)', '-Tol<br>(my)', 'Drill<br>Size(my)', 'Drill<br>Des', '<span class="block text-left"><br>Si</span>']
      .map((h) => `<th class="p-0 pt-px bg-[#b0ffff] border-t border-r-2 border-b border-black">${h}</th>`).join('')
      + '</tr><tr class="h-1"><td colspan="11" class="p-0 border-b-2 border-black bg-[#78b8a8]"></td></tr>');

    const cell = 'p-0.5 h-[33px] border-r-2 border-b-2 border-black';
    const field = (v, tint, active) => `<td class="${cell} ${tint}"><div class="flex items-start h-[27px] pl-0.5 border-2 ${active ? 'border-black border-r-[#909078] border-b-[#909078] outline-2 outline-black' : 'border-[#a0a090] border-r-[#c8c8b4] border-b-[#c8c8b4]'}"><svg class="w-[5px] h-[15px] shrink-0"><use href="#caret"/></svg><input aria-label="value" value="${v}" class="w-full min-w-0 h-4"></div></td>`;
    const rows = [
      ['A', 'T01', 149, 'Via', '254', '80', '0', '400'],
      ['B', 'T02', 8, 'Plated', '1000', '76', '76', '1100'],
      ['C', 'T03', 2, 'Plated', '1700.02', '76', '76', '1800'],
      ['D', 'T04', 5, 'NPlated', '3197.86', '100', '100', '3200'],
    ];
    const toolCell = (t, tint) => `<td class="${cell}"><button class="block w-full h-[27px] text-left border-2 border-[#a8f0dc] border-r-[#287864] border-b-[#287864] ${tint}">${t}</button></td>`;
    fill('tools', rows.map(([k, t, n, type, fin, plus, minus, size], i) => `<tr>
      <td class="${cell}"><span class="relative block size-5 mx-auto border border-black bg-white"><svg class="size-[18px]"><path d="M3 9.500h12M9.500 4v11" stroke="#000"/></svg><span class="absolute top-0 right-0 text-[7px] leading-1.5 font-normal">${k}</span></span></td>
      ${toolCell(t, i === 1 ? 'bg-[#ffc04c]' : '')}
      <td class="${cell} pr-1 text-right">${n}</td>
      <td class="${cell}"></td>
      <td class="${cell} bg-[#ffffcc]"><div class="flex items-center h-[27px] ml-1 pl-0.5 pr-1.5 border-2 border-[#d8d8b0] border-r-[#909078] border-b-[#909078]"><select aria-label="Type" class="min-w-0 grow appearance-none"><option>${type}</option></select><i class="w-3 h-1.5 border-2 border-[#d8d8b0] border-r-[#909078] border-b-[#909078]"></i></div></td>
      ${field(fin, 'bg-[#ffffcc]', i === 0)}${field(plus, 'bg-[#ffffcc]')}${field(minus, 'bg-[#ffffcc]')}${field(size, 'bg-white')}${field('', 'bg-white')}
      <td class="${cell}"></td></tr>`).join('')
      + `<tr><td class="${cell}"></td>${toolCell('Total', '')}<td class="${cell} pr-1 text-right">164</td>` + `<td class="${cell}"></td>`.repeat(8) + '</tr>');

    const face = 'w-full h-full whitespace-nowrap bg-[#9cdcdc] border-2 border-[#c8f6f2] border-r-[#4c8886] border-b-[#4c8886]';
    fill('steps', [['First', 'w-[60px]'], ['&lt;--', 'w-[34px] text-xs'], ['--&gt;', 'w-[35px] text-xs'], ['Last', 'w-[49px]']]
      .map(([t, w]) => `<div class="p-0.5 border border-black ${w}"><button class="${face}"><span class="-mx-1">${t}</span></button></div>`).join(''));
    fill('actions', ['Apply', 'Calc Drills', 'Update Table', 'Close'].map((t) => `<div class="p-0.5 border border-black"><button class="${face}">${t}</button></div>`).join(''));

    const views = ['M2 4h10M2 6h10M2 8h10M2 10h10', 'M3 3h8v6H3zM8 7h4v4H8z', 'M3 3h8v8H3zM5 5h4M5 7h4M5 9h4', 'M2 3h6M6 5h6M6 8h6M4 11h8M2 6h2', 'M2 3l5 2 5-2v7l-5 2-5-2zM7 5v7'];
    fill('views', views.map((d, i) => `<button aria-label="视图${i + 1}" class="size-4 ${i === 0 ? 'border border-[#203070] bg-[#d4d8e4]' : 'border border-transparent'}"><svg class="size-3.5"><path d="${d}" fill="none" stroke="#000"/></svg></button>`).join(''));

    const tasks = [['star', '兴'], ['floppy', 'T..'], ['gball', 'G.'], ['xwin', 'E..'], ['xwin', 'P..'], ['globe', 'p..'], ['globe', 'p..'], ['calc', '计'], ['lines', '制'], ['excel', '外'], ['note', '4..'], ['word', 'T..'], ['cfish', 'C.'], ['xwin', '4..'], ['xwin', 'J..'], ['doodle', 'L..'], ['excel', '4..'], ['excel', '4..'], ['eye', 'P..'], ['xwin', 'D.'], ['xwin', 'G.'], ['excel', 'Q.']];
    fill('tasks', tasks.map(([icon, t], i) => `<button class="flex items-center w-9 h-[22px] pl-0.5 overflow-hidden ${i === 19 ? 'border-2 border-[#404040] border-r-white border-b-white bg-[#ecebe6]' : 'border border-white border-r-2 border-b-2 border-r-[#404040] border-b-[#404040]'}"><svg class="size-4 shrink-0"><use href="#${icon}"/></svg><span class="ml-px">${t}</span></button>`).join(''));
  </script>
</body>
</html>
